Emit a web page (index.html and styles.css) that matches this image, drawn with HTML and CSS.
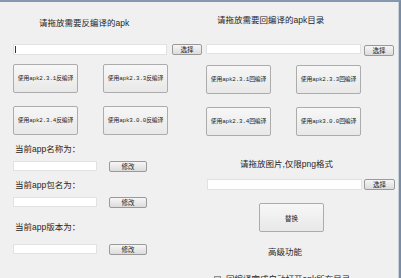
FILE: index.html
```html
<!DOCTYPE html>
<html lang="zh-CN">
<head>
<meta charset="utf-8">
<title>APK 编译工具</title>
<link rel="stylesheet" href="styles.css">
</head>
<body>
<div class="window">
  <section class="col col-left">
    <p class="title title-left">请拖放需要反编译的apk</p>
    <div class="pick-row pick-left">
      <div class="textbox"><span class="caret"></span></div>
      <button class="btn-small">选择</button>
    </div>
    <div class="btn-grid">
      <button class="btn-big">使用apk2.3.1反编译</button>
      <button class="btn-big">使用apk2.3.3反编译</button>
      <button class="btn-big">使用apk2.3.4反编译</button>
      <button class="btn-big">使用apk3.0.0反编译</button>
    </div>
    <p class="field-label label-1">当前app名称为：</p>
    <div class="edit-row row-1">
      <div class="textbox"></div>
      <button class="btn-small">修改</button>
    </div>
    <p class="field-label label-2">当前app包名为：</p>
    <div class="edit-row row-2">
      <div class="textbox"></div>
      <button class="btn-small">修改</button>
    </div>
    <p class="field-label label-3">当前app版本为：</p>
    <div class="edit-row row-3">
      <div class="textbox"></div>
      <button class="btn-small">修改</button>
    </div>
  </section>
  <section class="col col-right">
    <p class="title title-right">请拖放需要回编译的apk目录</p>
    <div class="pick-row pick-right">
      <div class="textbox"></div>
      <button class="btn-small">选择</button>
    </div>
    <div class="btn-grid">
      <button class="btn-big">使用apk2.3.1回编译</button>
      <button class="btn-big">使用apk2.3.3回编译</button>
      <button class="btn-big">使用apk2.3.4回编译</button>
      <button class="btn-big">使用apk3.0.0回编译</button>
    </div>
    <p class="title title-image">请拖放图片,仅限png格式</p>
    <div class="pick-row pick-image">
      <div class="textbox"></div>
      <button class="btn-small">选择</button>
    </div>
    <button class="btn-big btn-replace">替换</button>
    <p class="title title-advanced">高级功能</p>
    <label class="check-row"><span class="checkbox"></span><span class="check-text">回编译完成自动打开apk所在目录</span></label>
  </section>
</div>
</body>
</html>
```
FILE: styles.css
```css
* { box-sizing: border-box; }
html, body { margin: 0; padding: 0; }
body {
  width: 401px;
  height: 278px;
  overflow: hidden;
  background: #f0f0f0;
  font-family: "Liberation Sans", "Noto Sans CJK SC", sans-serif;
  color: #222;
}
p { margin: 0; }
button {
  margin: 0;
  padding: 0;
  font-family: "Noto Sans CJK SC", sans-serif;
  color: #222;
  cursor: default;
}
.window {
  width: 401px;
  height: 278px;
  border-top: 2px solid #8598b0;
  border-right: 2px solid #7a8ca3;
  box-shadow: inset -1px 0 0 #c9d1db;
  display: grid;
  grid-template-columns: 206px 1fr;
  overflow: hidden;
}
.col { display: flex; flex-direction: column; align-items: flex-start; }
.col-left { padding-left: 13px; }

.title, .field-label {
  font-size: 8.5px;
  line-height: 12px;
  height: 12px;
  white-space: nowrap;
  color: #262626;
}
.title-left { margin-top: 15px; margin-left: 26px; }
.title-right { margin-top: 12px; margin-left: 11px; }
.title-image { margin-top: 22px; margin-left: 34px; }
.title-advanced { margin-top: 14px; margin-left: 62px; }

.textbox {
  background: #fff;
  border: 1px solid #e2e2e2;
  height: 11px;
  position: relative;
}
.caret {
  position: absolute;
  left: 1px;
  top: 1px;
  width: 1px;
  height: 7px;
  background: #333;
}
.btn-small {
  height: 11px;
  width: 30px;
  border: 1px solid #9a9a9a;
  border-radius: 2px;
  background: linear-gradient(#f6f6f6, #dcdcdc);
  font-size: 6.5px;
  line-height: 9px;
}

.pick-row { display: flex; align-items: flex-start; }
.pick-left { margin-top: 15px; gap: 5px; }
.pick-left .textbox { width: 154px; }
.pick-right { margin-top: 18px; gap: 3px; }
.pick-right .textbox { width: 155px; height: 10px; }
.pick-right .btn-small { margin-top: 1px; }
.pick-image { margin-top: 9px; gap: 2px; margin-left: 1px; }
.pick-image .textbox { width: 155px; }
.pick-image .btn-small { width: 31px; }

.btn-grid {
  margin-top: 9px;
  display: grid;
  grid-template-columns: 65px 65px;
  grid-auto-rows: 29px;
  column-gap: 25px;
  row-gap: 13px;
}
.btn-big {
  border: 1px solid #acacac;
  border-radius: 2px;
  background: linear-gradient(#f7f7f7, #e8e8e8);
  font-family: "Liberation Mono", "Noto Sans CJK SC", monospace;
  font-size: 5.8px;
  line-height: 8px;
  white-space: nowrap;
  letter-spacing: -0.1px;
}
.btn-replace {
  margin-top: 13px;
  margin-left: 53px;
  width: 65px;
  height: 29px;
  font-family: "Noto Sans CJK SC", sans-serif;
  font-size: 6.5px;
}

.field-label { margin-left: 2px; }
.label-1 { margin-top: 8px; }
.label-2 { margin-top: 7px; }
.label-3 { margin-top: 13px; }
.edit-row { display: flex; gap: 12px; margin-top: 6px; }
.row-3 { margin-top: 11px; }
.edit-row .textbox { width: 84px; height: 10px; }
.edit-row .btn-small { width: 38px; }

.check-row {
  margin-top: 15px;
  margin-left: 8px;
  display: flex;
  align-items: center;
  gap: 5px;
  font-size: 8.5px;
  line-height: 12px;
  white-space: nowrap;
  color: #262626;
}
.checkbox {
  width: 7px;
  height: 7px;
  border: 1px solid #8e8f8f;
  background: linear-gradient(#d8d8d8, #eeeeee);
}
```
